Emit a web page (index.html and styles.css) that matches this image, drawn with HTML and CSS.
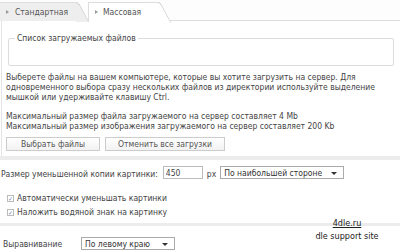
FILE: index.html
```html
<!DOCTYPE html>
<html lang="ru">
<head>
    <meta charset="UTF-8">
    <title>Загрузка файлов</title>
    <link rel="stylesheet" href="styles.css">
</head>
<body>
    <div class="tabs">
        <div class="tab">Стандартная</div>
        <div class="tab active">Массовая</div>
    </div>

    <div class="panel">
        <fieldset class="file-list">
            <legend>Список загружаемых файлов</legend>
        </fieldset>

        <p class="hint">Выберете файлы на вашем компьютере, которые вы хотите загрузить на сервер. Для одновременного выбора сразу нескольких файлов из директории используйте выделение мышкой или удерживайте клавишу Ctrl.</p>
        <p class="hint">Максимальный размер файла загружаемого на сервер составляет 4 Mb<br>Максимальный размер изображения загружаемого на сервер составляет 200 Kb</p>

        <div class="buttons">
            <button class="btn">Выбрать файлы</button>
            <button class="btn btn-wide">Отменить все загрузки</button>
        </div>
    </div>

    <div class="row size-row">
        <span>Размер уменьшенной копии картинки:</span>
        <input class="field" type="text" value="450">
        <span>px</span>
        <div class="select select-side">По наибольшей стороне<span class="caret"></span></div>
    </div>

    <div class="checks">
        <label class="check"><span class="box">&#10003;</span>Автоматически уменьшать картинки</label>
        <label class="check"><span class="box">&#10003;</span>Наложить водяной знак на картинку</label>
    </div>

    <div class="row align-row">
        <span class="align-label">Выравнивание</span>
        <div class="select select-align">По левому краю<span class="caret"></span></div>
    </div>

    <div class="watermark">
        <a href="#">4dle.ru</a>
        <div>dle support site</div>
    </div>
</body>
</html>
```

FILE: styles.css
```css
* {
    margin: 0;
    padding: 0;
    box-sizing: border-box;
}

body {
    font-family: "DejaVu Sans Condensed", "DejaVu Sans", Tahoma, sans-serif;
    font-size: 8.5px;
    color: #444;
    background: white;
    position: relative;
    width: 400px;
    height: 251px;
    overflow: hidden;
}

.tabs {
    display: flex;
    height: 21px;
    padding-top: 2px;
    border-bottom: 1px solid #ddd;
    background: #fdfdfd;
}

.tab {
    position: relative;
    width: 78px;
    height: 19px;
    padding: 4px 0 0 15px;
    background: #eee;
    border-top: 1px solid #ddd;
    color: #555;
}

.tab::before {
    content: "";
    position: absolute;
    left: 6px;
    top: 7px;
    border-left: 3px solid #999;
    border-top: 2px solid transparent;
    border-bottom: 2px solid transparent;
}

.tab::after {
    content: "";
    position: absolute;
    top: -1px;
    right: -6px;
    width: 12px;
    height: 19px;
    background: #eee;
    border-top: 1px solid #ddd;
    border-right: 1px solid #ccc;
    transform: skewX(28deg);
    border-top-right-radius: 4px;
}

.tab.active {
    margin-left: 10px;
    width: 72px;
    height: 20px;
    padding-left: 14px;
    background: white;
    border-left: 1px solid #ddd;
    z-index: 1;
}

.tab.active::after {
    background: white;
    height: 20px;
}

.panel {
    padding: 12px 6px 0 4px;
    border-left: 1px solid #e4e4e4;
    margin-left: 1px;
}

.file-list {
    height: 33px;
    margin: 0 0 6px 2px;
    border: 1px solid #ddd;
    border-radius: 2px;
    padding: 0 6px;
}

.file-list legend {
    padding: 0 2px;
    color: #444;
}

.hint {
    line-height: 10px;
    margin-bottom: 9px;
}

.hint + .hint {
    margin-bottom: 6px;
}

.buttons {
    display: flex;
    gap: 5px;
    padding-bottom: 5px;
}

.btn {
    font: inherit;
    color: #555;
    width: 94px;
    height: 14px;
    background: linear-gradient(#fff, #f2f2f2);
    border: 1px solid #ccc;
}

.btn-wide {
    width: 120px;
}

.row {
    display: flex;
    align-items: center;
    border-top: 4px solid #ececec;
}

.size-row {
    gap: 4px;
    padding: 6px 0 0 1px;
    height: 27px;
    align-items: flex-start;
}

.size-row > span:first-child {
    margin-top: 3px;
    margin-right: 1px;
}

.size-row > span:nth-child(3) {
    margin-top: 3px;
}

.field {
    font: inherit;
    color: #444;
    width: 40px;
    height: 13px;
    border: 1px solid #bbb;
    padding-left: 2px;
}

.select {
    position: relative;
    height: 13px;
    border: 1px solid #aaa;
    padding: 1px 0 0 3px;
    color: #333;
}

.select-side {
    width: 124px;
}

.select-align {
    width: 94px;
}

.caret {
    position: absolute;
    right: 6px;
    top: 5px;
    border-top: 3px solid #333;
    border-left: 3px solid transparent;
    border-right: 3px solid transparent;
}

.checks {
    padding: 8px 0 4px 7px;
}

.check {
    display: flex;
    align-items: center;
    height: 14px;
}

.box {
    width: 7px;
    height: 7px;
    border: 1px solid #bbb;
    font-size: 6px;
    line-height: 5px;
    text-align: center;
    color: #5577aa;
    margin-right: 3px;
}

.align-row {
    border-top-width: 3px;
    padding: 11px 0 0 3px;
}

.align-label {
    width: 78px;
}

.watermark {
    position: absolute;
    left: 310px;
    top: 217px;
    width: 74px;
    text-align: center;
    font-family: "DejaVu Sans Condensed", "DejaVu Sans", sans-serif;
    font-size: 9px;
    line-height: 13px;
    color: #222;
}

.watermark a {
    color: #222;
}
```
